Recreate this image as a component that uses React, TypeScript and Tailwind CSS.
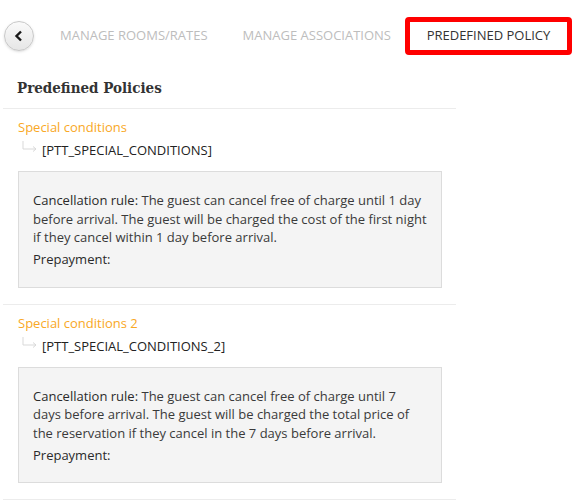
const policies = [
  {
    name: 'Special conditions',
    code: '[PTT_SPECIAL_CONDITIONS]',
    rule: 'The guest can cancel free of charge until 1 day before arrival. The guest will be charged the cost of the first night if they cancel within 1 day before arrival.',
  },
  {
    name: 'Special conditions 2',
    code: '[PTT_SPECIAL_CONDITIONS_2]',
    rule: 'The guest can cancel free of charge until 7 days before arrival. The guest will be charged the total price of the reservation if they cancel in the 7 days before arrival.',
  },
];

const SubArrow = () => (
  <svg width="18" height="12" viewBox="0 0 18 12" className="mr-[3px] shrink-0">
    <path d="M2 0 V8 H15" fill="none" stroke="#d9d9d9" strokeWidth="1" />
    <path d="M12 5.5 L15 8 L12 10.5" fill="none" stroke="#d9d9d9" strokeWidth="1" />
  </svg>
);

const App = () => {
  return (
    <div className="h-[500px] w-[585px] bg-white font-['Open_Sans',sans-serif] text-[13px] text-[#3a3a3a]">
      <nav className="flex items-center pt-[17px]">
        <button
          type="button"
          className="ml-[4px] flex h-[30px] w-[30px] items-center justify-center rounded-full border border-[#c8c8c8] bg-gradient-to-b from-[#fafafa] to-[#e6e6e6] shadow-sm"
        >
          <svg width="10" height="12" viewBox="0 0 10 12">
            <path d="M7 1.5 L2.5 6 L7 10.5" fill="none" stroke="#1a1a1a" strokeWidth="2.4" />
          </svg>
        </button>
        <span className="ml-[26px] text-[#bdbdbd]">MANAGE ROOMS/RATES</span>
        <span className="ml-[35px] text-[#bdbdbd]">MANAGE ASSOCIATIONS</span>
        <span className="ml-[14px] flex h-[38px] w-[167px] items-center justify-center rounded-[4px] border-[5px] border-[#f00] text-[#333]">
          PREDEFINED POLICY
        </span>
      </nav>

      <h1 className="ml-[17px] mt-[22px] font-['DejaVu_Serif_Condensed','DejaVu_Serif',serif] text-[15px] font-bold leading-[22px] text-[#333]">
        Predefined Policies
      </h1>

      <div className="ml-[3px] mt-[9px] w-[453px] border-t border-[#ececec]">
        {policies.map(policy => (
          <section key={policy.code} className="border-b border-[#ececec] pb-[16px] pl-[15px] pt-[9px]">
            <p className="leading-[18px] text-[#f9a825]">{policy.name}</p>
            <p className="mt-[5px] flex items-center leading-[18px] text-[#222]">
              <span className="ml-[3px] -mt-[6px]">
                <SubArrow />
              </span>
              {policy.code}
            </p>
            <div className="mt-[12px] w-[424px] border border-[#dcdcdc] bg-[#f4f4f4] px-[14px] pb-[18px] pt-[19px] leading-[18.5px]">
              <p>
                <span className="text-[#2a2a2a]">Cancellation rule:</span> {policy.rule}
              </p>
              <p className="mt-[3.5px] text-[#2a2a2a]">Prepayment:</p>
            </div>
          </section>
        ))}
      </div>
    </div>
  );
};

export default App;
